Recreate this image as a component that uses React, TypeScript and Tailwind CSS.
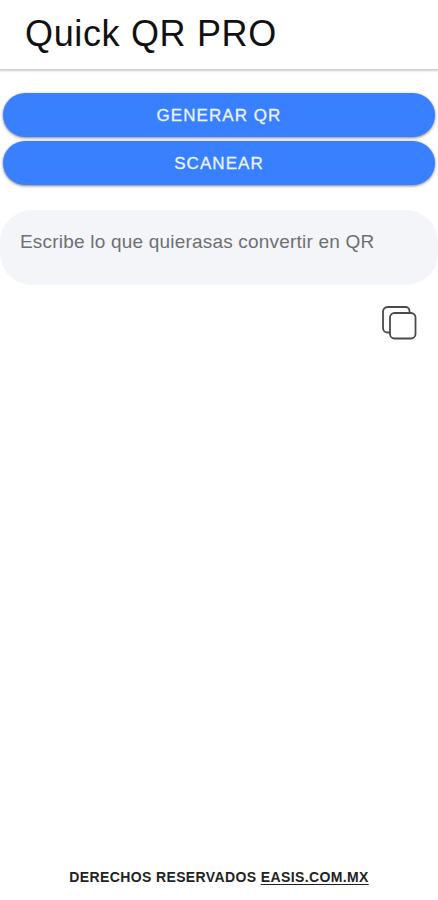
import { useState } from 'react'

function CopyIcon() {
  return (
    <svg width="36" height="36" viewBox="0 0 36 36" fill="none" stroke="#4a4a4a" strokeWidth="1.8" strokeLinejoin="round" strokeLinecap="round">
      <rect x="9" y="8" width="25.5" height="25.5" rx="4.5" />
      <path d="M28.5 7.4V6a4 4 0 0 0-4-4H6.5A4.5 4.5 0 0 0 2 6.5v16.8a4.5 4.5 0 0 0 4.5 4.2h2" />
    </svg>
  )
}

const buttonClass =
  'h-[44px] w-full rounded-full bg-[#3880ff] text-center text-[17px] leading-[43px] tracking-[1.05px] text-[#eef4ff] shadow-[0_1px_3px_rgba(0,0,0,0.5)] [-webkit-text-stroke:0.3px_#eef4ff]'

export default function App() {
  const [text, setText] = useState('')

  return (
    <div className="flex h-screen flex-col overflow-hidden bg-white font-['Liberation_Sans',Arial,sans-serif]">
      <header className="h-[69px] shrink-0 pl-[25px] shadow-[0_1px_2px_1px_rgba(0,0,0,0.2)]">
        <h1 className="text-[36px] leading-[68px] tracking-[0.65px] text-[#111111]">Quick QR PRO</h1>
      </header>

      <main className="flex grow flex-col pt-6">
        <div className="flex flex-col gap-1 px-[3px]">
          <button className={buttonClass}>GENERAR QR</button>
          <button className={buttonClass}>SCANEAR</button>
        </div>

        <textarea
          className="mt-[25px] block h-[75px] w-full resize-none overflow-hidden rounded-[32px] bg-[#f4f5f8] px-5 pt-5 text-[19px] leading-6 tracking-[0.2px] text-[#333333] outline-none placeholder:text-[#6e6f71]"
          placeholder="Escribe lo que quierasas convertir en QR"
          value={text}
          onChange={(e) => setText(e.target.value)}
        />

        <div className="mt-5 flex justify-end pr-[21px]">
          <button aria-label="Copiar">
            <CopyIcon />
          </button>
        </div>
      </main>

      <footer className="pb-3.5 text-center text-[14px] leading-[18px] font-bold tracking-[0.38px] text-[#222222]">
        DERECHOS RESERVADOS <a className="underline decoration-1 underline-offset-2">EASIS.COM.MX</a>
      </footer>
    </div>
  )
}
